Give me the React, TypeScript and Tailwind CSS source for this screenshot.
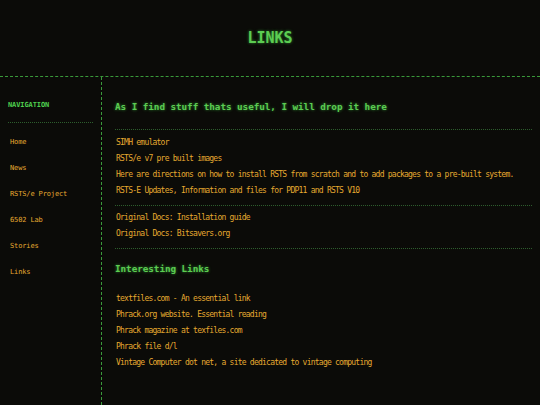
const navItems = ['Home', 'News', 'RSTS/e Project', '6502 Lab', 'Stories', 'Links']

const rstsLinks = [
  'SIMH emulator',
  'RSTS/e v7 pre built images',
  'Here are directions on how to install RSTS from scratch and to add packages to a pre-built system.',
  'RSTS-E Updates, Information and files for PDP11 and RSTS V10',
]

const docLinks = ['Original Docs: Installation guide', 'Original Docs: Bitsavers.org']

const otherLinks = [
  'textfiles.com - An essential link',
  'Phrack.org website. Essential reading',
  'Phrack magazine at texfiles.com',
  'Phrack file d/l',
  'Vintage Computer dot net, a site dedicated to vintage computing',
]

function LinkList({ items }: { items: string[] }) {
  return (
    <ul className="pl-[1px]">
      {items.map((t) => (
        <li key={t} className="h-[16px] leading-[16px] text-[8px] tracking-[-0.76px] text-[#e6aa30] whitespace-nowrap">
          <a href="#">{t}</a>
        </li>
      ))}
    </ul>
  )
}

export default function App() {
  return (
    <div className="min-h-[405px] bg-[#0b0b08] font-['DejaVu_Sans_Mono','Liberation_Mono',monospace]">
      <header className="h-[77px] border-b border-dashed border-[#3a9a3a] flex items-center justify-center">
        <h1 className="text-[15px] font-bold text-[#5ccc52] [text-shadow:0_0_3px_#2f8f2f]">LINKS</h1>
      </header>

      <div className="flex">
        <aside className="w-[102px] shrink-0 border-r border-dashed border-[#3a9a3a] min-h-[328px] pl-2 pr-[8px] pt-[23px]">
          <p className="h-[10px] leading-[10px] text-[7px] font-bold tracking-[-0.1px] text-[#4fd04f]">NAVIGATION</p>
          <div className="mt-[12px] border-t border-dotted border-[#2d5e2d]" />
          <ul className="mt-[14px] pl-[2px] flex flex-col gap-4">
            {navItems.map((n) => (
              <li key={n} className="h-[10px] leading-[10px] text-[7px] tracking-[-0.13px] text-[#e6aa30]">
                <a href="#">{n}</a>
              </li>
            ))}
          </ul>
        </aside>

        <main className="flex-1 pl-[13px] pr-2 pt-[24px]">
          <h2 className="h-[12px] leading-[12px] text-[9.3px] font-bold tracking-[-0.05px] text-[#5ccc52] [text-shadow:0_0_3px_#2f8f2f]">
            As I find stuff thats useful, I will drop it here
          </h2>
          <div className="mt-[16px] border-t border-dotted border-[#2d5e2d]" />
          <div className="mt-[5px]">
            <LinkList items={rstsLinks} />
          </div>
          <div className="mt-[6px] border-t border-dotted border-[#2d5e2d]" />
          <div className="mt-[4px]">
            <LinkList items={docLinks} />
          </div>
          <div className="mt-[6px] border-t border-dotted border-[#2d5e2d]" />

          <h2 className="mt-[14px] h-[12px] leading-[12px] text-[9.3px] font-bold tracking-[-0.05px] text-[#5ccc52] [text-shadow:0_0_3px_#2f8f2f]">
            Interesting Links
          </h2>
          <div className="mt-[16px]">
            <LinkList items={otherLinks} />
          </div>
        </main>
      </div>
    </div>
  )
}
